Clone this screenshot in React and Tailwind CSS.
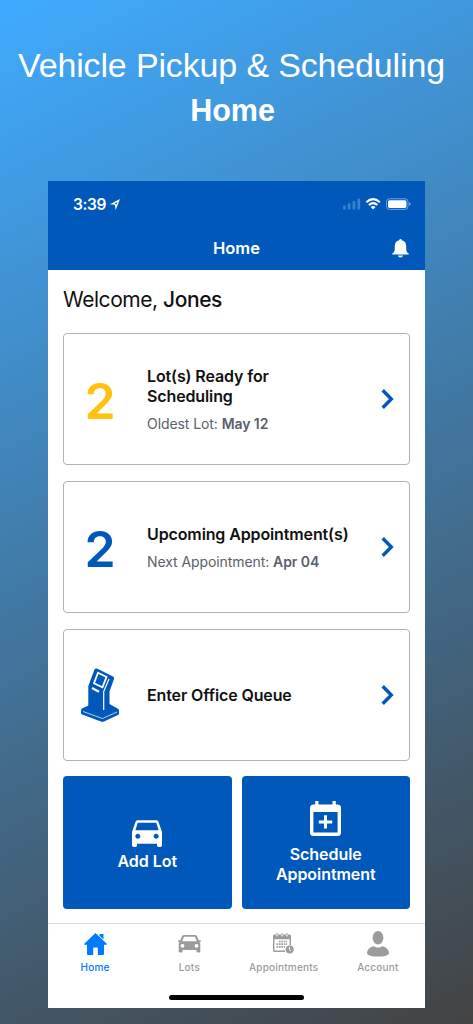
import React from 'react';

// --- Icons ---
const Kiosk = () => (
    <svg width="38" height="54" viewBox="0 0 38 54" fill="#0059BA">
        <path d="M0 42.500 Q0 41 1.500 40.300 L7.300 37.500 V18 L13.500 1.500 Q14.200 0 16 .5 L32 8.500 Q33.500 9.500 33 11 L28.500 23.500 V36 L36.500 40.500 Q38 41.200 38 42.500 V45.500 Q38 46.500 37 47 L23 53.500 Q21.500 54.300 20 53.500 L1 46.500 Q0 46 0 45 Z" />
        <path d="M17 4.800 L25.500 8.900 L21.500 19.300 L13 15.300 Z" fill="none" stroke="#fff" strokeWidth="1.800" />
        <path d="M11 20 L18 23.700" stroke="#fff" strokeWidth="2.300" />
        <path d="M28 11 L22.700 23.500 V42" fill="none" stroke="#fff" strokeWidth="1.200" />
        <path d="M2 43.500 L21.500 50.500 L36 44" fill="none" stroke="#fff" strokeWidth=".7" />
    </svg>
);

const Chevron = () => (
    <svg width="13" height="20" viewBox="0 0 13 20" fill="none" stroke="#0059BA" strokeWidth="3.400">
        <path d="M1.700 1.300 L10.300 10 L1.700 18.700" />
    </svg>
);

const CarFront = () => (
    <svg width="40" height="40" viewBox="0 0 24 24" fill="#fff">
        <path d="M18.92 6.01C18.72 5.42 18.16 5 17.5 5h-11c-.66 0-1.21.42-1.42 1.01L3 12v8c0 .55.45 1 1 1h1c.55 0 1-.45 1-1v-1h12v1c0 .55.45 1 1 1h1c.55 0 1-.45 1-1v-8l-2.08-5.99zM6.5 16c-.83 0-1.5-.67-1.5-1.5S5.67 13 6.5 13s1.5.67 1.5 1.5S7.33 16 6.5 16zm11 0c-.83 0-1.5-.67-1.5-1.5s.67-1.5 1.5-1.5 1.5.67 1.5 1.5-.67 1.5-1.5 1.5zM5 11l1.5-4.500h11L19 11H5z" />
    </svg>
);

const CalendarPlus = () => (
    <svg width="31" height="35" viewBox="0 0 31 35" fill="#fff">
        <path fillRule="evenodd" d="M5.200 0 H8.500 V3.500 H22.500 V0 H25.800 V3.500 H27.500 Q31 3.500 31 7 V31.500 Q31 35 27.500 35 H3.500 Q0 35 0 31.500 V7 Q0 3.500 3.500 3.500 H5.200 Z M3.400 11 V31.600 H27.600 V11 Z" />
        <path d="M14 14.200 h3 v5.200 h5.200 v3 h-5.200 v5.200 h-3 v-5.200 h-5.200 v-3 h5.200 z" />
    </svg>
);

const Bell = () => (
    <svg width="17" height="19" viewBox="0 0 17 19" fill="#fff">
        <path d="M8.500 0 Q9.600 0 9.800 1.200 C13.600 2 14.200 5 14.200 8 C14.200 12 14.600 13.300 16.600 14.300 Q17 15.500 16 15.500 H1 Q0 15.500 .4 14.300 C2.400 13.300 2.800 12 2.800 8 C2.800 5 3.400 2 7.200 1.200 Q7.400 0 8.500 0 Z M6 16.500 H11 Q10.700 18.600 8.500 18.600 Q6.300 18.600 6 16.500 Z" />
    </svg>
);

const LocationArrow = () => (
    <svg width="10" height="11" viewBox="0 0 10 11">
        <path fillRule="evenodd" fill="#fff" d="M10 0 L0 5.200 L4.800 5.800 L5.700 11 Z M7.600 2.700 L5.900 6.300 L5.700 5 L4.600 4.500 Z" />
    </svg>
);

const StatusIcons = () => (
    <svg width="68" height="12" viewBox="0 0 68 12">
        <g fill="#3a80ce">
            <rect x="0" y="7.500" width="2.800" height="4" rx=".8" />
            <rect x="4.800" y="5.200" width="2.800" height="6.300" rx=".8" />
            <rect x="9.600" y="3" width="2.800" height="8.500" rx=".8" />
            <rect x="14.400" y=".5" width="2.800" height="11" rx=".8" />
        </g>
        <g fill="none" stroke="#fff" strokeWidth="2.100">
            <path d="M23.300 4.200 Q30 -1.800 36.900 4.200" />
            <path d="M25.900 7 Q30.100 3.400 34.400 7" />
        </g>
        <path d="M27.700 8.900 Q30.100 7 32.500 8.900 L30.100 11.400 Z" fill="#fff" />
        <rect x="43.500" y=".8" width="21.500" height="10.600" rx="3" fill="none" stroke="#6fa2db" strokeWidth="1" />
        <rect x="45" y="2.300" width="18.500" height="7.600" rx="1.600" fill="#fff" />
        <path d="M66 4.300 Q67.700 5 67.700 6.100 Q67.700 7.200 66 7.900 Z" fill="#6fa2db" />
    </svg>
);

const HomeIcon = () => (
    <svg width="23" height="22" viewBox="0 0 23 22" fill="#007AFF">
        <path d="M11.500 0 L23 11 Q23 11.800 22.300 11.800 H20 V21 Q20 22 19 22 H13.800 V14.500 H9.200 V22 H4 Q3 22 3 21 V11.800 H.7 Q0 11.800 0 11 Z" />
        <path d="M15.500 1 H19.500 V6.500 L15.500 2.800 Z" />
    </svg>
);

const LotsIcon = () => (
    <svg width="23" height="18" viewBox="0 0 23 18" fill="#9b9b9b">
        <path fillRule="evenodd" d="M6 0 H17 Q18.500 0 19 1.300 L20.700 5.300 H22 Q23 5.300 23 6.200 Q23 7 22 7 H21.500 Q22.300 8 22.300 9.500 V16.500 Q22.300 17.500 21.300 17.500 H19.500 Q18.500 17.500 18.500 16.500 V15 H4.500 V16.500 Q4.500 17.500 3.500 17.500 H1.700 Q.7 17.500 .7 16.500 V9.500 Q.7 8 1.500 7 H1 Q0 7 0 6.200 Q0 5.300 1 5.300 H2.300 L4 1.300 Q4.500 0 6 0 Z M6 1.700 L4.200 6.300 H18.800 L17 1.700 Z M4.500 8.900 a1.900 1.900 0 1 0 .01 0 Z M18.500 8.900 a1.900 1.900 0 1 0 .01 0 Z" />
    </svg>
);

const AppointmentsIcon = () => (
    <svg width="21" height="21" viewBox="0 0 21 21" fill="#9b9b9b">
        <path fillRule="evenodd" d="M1.500 1.500 H3 V3.300 H5 V1.500 H8 V3.300 H10 V1.500 H13 V3.300 H15 V1.500 H16.500 Q18 1.500 18 3 V12 H16.600 V6.200 H1.400 V17.600 H12 V19 H1.500 Q0 19 0 17.500 V3 Q0 1.500 1.500 1.500 Z" />
        <path d="M3.500 0 h1 v2.700 h-1 z M8.500 0 h1 v2.700 h-1 z M13.500 0 h1 v2.700 h-1 z" />
        <path d="M5.900 8.500 H14 M3.500 11.200 H14 M3.500 13.900 H12" stroke="#9b9b9b" strokeWidth="1.700" strokeDasharray="1.700 .7" />
        <circle cx="16.700" cy="16.500" r="4" />
        <path d="M16.500 14 V16.800 L18 18" fill="none" stroke="#fff" strokeWidth="1" />
    </svg>
);

const AccountIcon = () => (
    <svg width="22" height="26" viewBox="0 0 22 26" fill="#9b9b9b">
        <ellipse cx="11" cy="6.800" rx="5.400" ry="6.800" />
        <path d="M0 22.500 Q0 17 6.500 15.300 Q11 18 15.500 15.300 Q22 17 22 22.500 Q21 25.600 11 25.600 Q1 25.600 0 22.500 Z" />
    </svg>
);

// --- Data ---
const cards = [
    { title: ['Lot(s) Ready for', 'Scheduling'], count: 2, color: 'text-[#FFC20E]', label: 'Oldest Lot:', value: 'May 12' },
    { title: ['Upcoming Appointment(s)'], count: 2, color: 'text-[#0059BA]', label: 'Next Appointment:', value: 'Apr 04' },
    { title: ['Enter Office Queue'] },
];

const tabs = [
    { name: 'Home', icon: <HomeIcon />, active: true },
    { name: 'Lots', icon: <LotsIcon /> },
    { name: 'Appointments', icon: <AppointmentsIcon /> },
    { name: 'Account', icon: <AccountIcon /> },
];

const Card = ({ card }) => (
    <button className="flex h-[132px] w-full items-center rounded-[4px] border border-[#adb2bb] text-left">
        <div className="flex w-[72px] shrink-0 justify-center">
            {card.count ? (
                <span className={`text-[50px] leading-[60px] font-semibold pt-1 ${card.color}`}>{card.count}</span>
            ) : (
                <Kiosk />
            )}
        </div>
        <div className="flex-1 pt-[2px] pl-[11px]">
            {card.title.map(line => (
                <p key={line} className="text-[16px] leading-[19.5px] font-semibold tracking-[-0.12px] whitespace-nowrap text-[#111]">{line}</p>
            ))}
            {card.label && (
                <p className="mt-[9px] text-[14px] leading-[18px] tracking-[-0.08px] text-[#5b6069]">
                    {card.label} <span className="font-semibold">{card.value}</span>
                </p>
            )}
        </div>
        <div className="mr-[15.5px] shrink-0">
            <Chevron />
        </div>
    </button>
);

// --- Main Screen ---
export default function App() {
    return (
        <div className="h-[1024px] w-[473px] overflow-hidden bg-[linear-gradient(154deg,#3fabff,#434343)] font-['Inter',sans-serif]">
            <div className="h-[181px] w-[463px] pt-[42px] text-center font-['Liberation_Sans',sans-serif] text-white">
                <h1 className="text-[34px] leading-[46px] tracking-[-0.15px] whitespace-nowrap">Vehicle Pickup &amp; Scheduling</h1>
                <h2 className="pl-[2px] text-[30.5px] leading-[44px] font-bold">Home</h2>
            </div>
            <div className="ml-12 flex h-[827px] w-[377px] flex-col bg-white">
                <div className="h-[89px] bg-[#0059BA] text-white">
                    <div className="flex h-[46px] items-center pl-[25px] pr-[14px]">
                        <span className="pt-px text-[15.5px] font-semibold tracking-[-0.4px]">3:39</span>
                        <span className="ml-1"><LocationArrow /></span>
                        <span className="ml-auto"><StatusIcons /></span>
                    </div>
                    <div className="grid h-[43px] grid-cols-[1fr_auto_1fr] items-center pr-4">
                        <span />
                        <span className="pl-4 text-[16.5px] font-semibold">Home</span>
                        <span className="justify-self-end"><Bell /></span>
                    </div>
                </div>
                <div className="flex flex-col px-[15px] pt-[15px]">
                    <p className="h-12 text-[21px] leading-[30px] tracking-[-0.45px] text-[#111]">Welcome, <span className="font-medium">Jones</span></p>
                    <div className="flex flex-col gap-4">
                        {cards.map(card => (
                            <Card key={card.title[0]} card={card} />
                        ))}
                    </div>
                    <div className="mt-[15px] grid grid-cols-2 gap-[10px] text-[16px] leading-[19.5px] font-semibold tracking-[-0.05px] text-white">
                        <button className="flex h-[133px] flex-col items-center justify-center rounded-[4px] bg-[#0059BA] pb-px">
                            <CarFront />
                            <span>Add Lot</span>
                        </button>
                        <button className="flex h-[133px] flex-col items-center justify-center gap-[9px] rounded-[4px] bg-[#0059BA]">
                            <CalendarPlus />
                            <span>Schedule<br />Appointment</span>
                        </button>
                    </div>
                </div>
                <div className="mt-auto h-[85px] border-t border-[#dcdcde]">
                    <div className="grid h-[71px] grid-cols-4">
                        {tabs.map(tab => (
                            <div key={tab.name} className={`flex flex-col items-center text-[10px] leading-[14px] font-medium tracking-[0.2px] ${tab.active ? 'text-[#007AFF]' : 'text-[#9b9b9b]'}`}>
                                <span className="flex h-[36px] items-center pt-[3px]">{tab.icon}</span>
                                {tab.name}
                            </div>
                        ))}
                    </div>
                    <div className="mx-auto h-[5px] w-[135px] rounded-full bg-black" />
                </div>
            </div>
        </div>
    );
}
